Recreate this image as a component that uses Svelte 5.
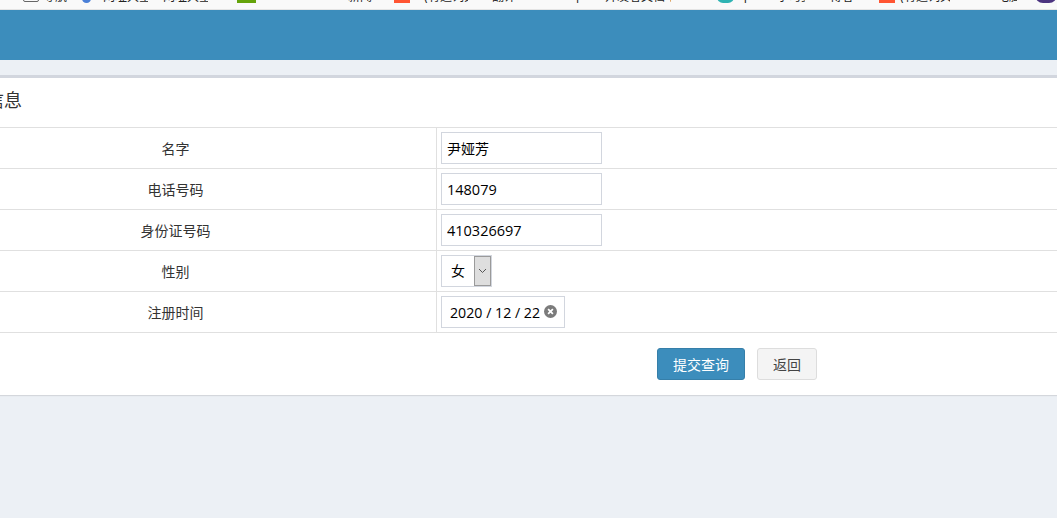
<script>
	// clipped bookmarks bar along the top edge of the window
	const bookmarks = [
		{ kind: 'box', w: 16, gap: 23 },
		{ kind: 'text', label: '导航', w: 24, gap: 4 },
		{ kind: 'dot', w: 9, gap: 15 },
		{ kind: 'text', label: '网址大全 官方', w: 45, gap: 12 },
		{ kind: 'text', label: '网址大全 官方', w: 45, gap: 15 },
		{ kind: 'green', w: 19, gap: 29 },
		{ kind: 'text', label: '新闻', w: 24, gap: 92 },
		{ kind: 'red', w: 16, gap: 22 },
		{ kind: 'text', label: '(有道词典)', w: 44, gap: 14 },
		{ kind: 'text', label: '翻译', w: 26, gap: 24 },
		{ kind: 'text', label: '|', w: 3, gap: 58 },
		{ kind: 'text', label: '开发者文档 官方', w: 66, gap: 26 },
		{ kind: 'teal', w: 17, gap: 46 },
		{ kind: 'text', label: '[', w: 6, gap: 10 },
		{ kind: 'text', label: '学习资料', w: 28, gap: 27 },
		{ kind: 'text', label: '博客', w: 25, gap: 25 },
		{ kind: 'red', w: 16, gap: 24 },
		{ kind: 'text', label: '(有道词典)', w: 50, gap: 5 },
		{ kind: 'text', label: '电脑', w: 20, gap: 47 },
		{ kind: 'purple', w: 22, gap: 18 }
	];

	const rows = [
		{ label: '名字', value: '尹娅芳', cjk: true },
		{ label: '电话号码', value: '148079' },
		{ label: '身份证号码', value: '410326697' }
	];
</script>

<div class="bookmarks">
	{#each bookmarks as b}
		<span class="bm {b.kind}" style="width:{b.w}px;margin-left:{b.gap}px">{b.label ?? ''}</span>
	{/each}
</div>

<header class="topbar"></header>

<div class="content">
	<section class="box">
		<h3 class="box-title">用户信息</h3>
		<table>
			<tbody>
				{#each rows as row}
					<tr>
						<td class="label">{row.label}</td>
						<td class="field"><input type="text" class:cjk={row.cjk} value={row.value} /></td>
					</tr>
				{/each}
				<tr>
					<td class="label">性别</td>
					<td class="field">
						<div class="select">
							<span class="select-value">女</span>
							<span class="select-arrow">
								<svg width="9" height="6" viewBox="0 0 9 6"><path d="M1 1l3.5 3.5L8 1" fill="none" stroke="#555" stroke-width="1" /></svg>
							</span>
						</div>
					</td>
				</tr>
				<tr>
					<td class="label">注册时间</td>
					<td class="field">
						<div class="date">
							<span>2020 / 12 / 22</span>
							<svg class="clear" width="13" height="13" viewBox="0 0 12 12">
								<circle cx="6" cy="6" r="6" fill="#7b7b7b" />
								<path d="M3.8 3.8l4.4 4.4M8.2 3.8l-4.4 4.4" stroke="#fff" stroke-width="1.6" />
							</svg>
						</div>
					</td>
				</tr>
			</tbody>
		</table>
		<div class="actions">
			<button class="btn primary">提交查询</button>
			<button class="btn plain">返回</button>
		</div>
	</section>
</div>

<style>
	:global(html), :global(body) {
		margin: 0;
		height: 100%;
		overflow: hidden;
		background: #ecf0f5;
	}

	:global(body) {
		font-family: "Liberation Sans", "Noto Sans CJK SC", sans-serif;
		font-size: 14px;
		color: #333;
	}

	.bookmarks {
		display: flex;
		align-items: flex-end;
		height: 9px;
		background: #f9f9f9;
		border-bottom: 1px solid #e4e4e4;
		overflow: hidden;
		box-sizing: content-box;
	}

	.bm {
		flex: none;
		margin-bottom: 6px;
		font-size: 12px;
		line-height: 12px;
		height: 12px;
		color: #222;
		white-space: nowrap;
		overflow: hidden;
	}

	.bm.box { border: 1.5px solid #666; border-radius: 2px; box-sizing: border-box; margin-bottom: 7px; }
	.bm.dot { background: #4a80d8; border-radius: 50%; height: 9px; margin-bottom: 6px; }
	.bm.green { background: #64a30a; margin-bottom: 6px; }
	.bm.red { background: #ff5533; margin-bottom: 6px; }
	.bm.teal { background: #fff; border: 3px solid #2eb3b3; border-radius: 6px; box-sizing: border-box; margin-bottom: 6px; }
	.bm.purple { background: #4b3480; border-radius: 8px; height: 20px; margin-bottom: 6px; }

	.topbar {
		height: 50px;
		background: #3c8dbc;
	}

	.content {
		padding-top: 15px;
		margin-left: -85px;
		width: 1400px;
	}

	section.box {
		background: #fff;
		border-top: 3px solid #d2d6de;
		box-shadow: 0 1px 1px rgba(0, 0, 0, 0.1);
	}

	.box-title {
		margin: 0;
		height: 49px;
		box-sizing: border-box;
		padding: 12px 0 0 35px;
		font-size: 18px;
		font-weight: 400;
		line-height: 22px;
		color: #333;
	}

	table {
		width: 100%;
		border-collapse: collapse;
		table-layout: fixed;
	}

	tr {
		border-top: 1px solid #e0e0e0;
		border-bottom: 1px solid #e0e0e0;
	}

	td {
		height: 40px;
		padding: 0;
	}

	.label {
		width: 521px;
		text-align: center;
		border-right: 1px solid #e0e0e0;
		color: #333;
	}

	.field {
		padding-left: 4px;
	}

	input, .select, .date {
		box-sizing: border-box;
		height: 32px;
		border: 1px solid #d2d6de;
		background: #fff;
		font-family: "Open Sans", "Noto Sans CJK SC", sans-serif;
		color: #000;
		vertical-align: middle;
	}

	input {
		display: block;
		width: 161px;
		padding: 0 5px;
		font-size: 14.5px;
		outline: none;
	}

	input.cjk {
		font-size: 14px;
	}

	.select {
		display: flex;
		width: 51px;
	}

	.select-value {
		flex: 1;
		padding-left: 9px;
		font-size: 14px;
		line-height: 30px;
	}

	.select-arrow {
		display: flex;
		align-items: center;
		justify-content: center;
		width: 17px;
		background: #dedede;
		border: 1px solid #9a9a9a;
		box-sizing: border-box;
	}

	.date {
		display: flex;
		align-items: center;
		width: 124px;
		padding-left: 8px;
		font-size: 14.2px;
	}

	.clear {
		margin-left: 4px;
		margin-top: -2px;
	}

	.actions {
		display: flex;
		gap: 12px;
		padding: 15px 0 15px 742px;
	}

	.btn {
		height: 32px;
		box-sizing: border-box;
		border-radius: 3px;
		font-family: inherit;
		font-size: 14px;
		padding: 0;
	}

	.primary {
		width: 88px;
		background: #3c8dbc;
		border: 1px solid #367fa9;
		color: #fff;
	}

	.plain {
		width: 60px;
		background: #f4f4f4;
		border: 1px solid #ddd;
		color: #444;
	}
</style>
